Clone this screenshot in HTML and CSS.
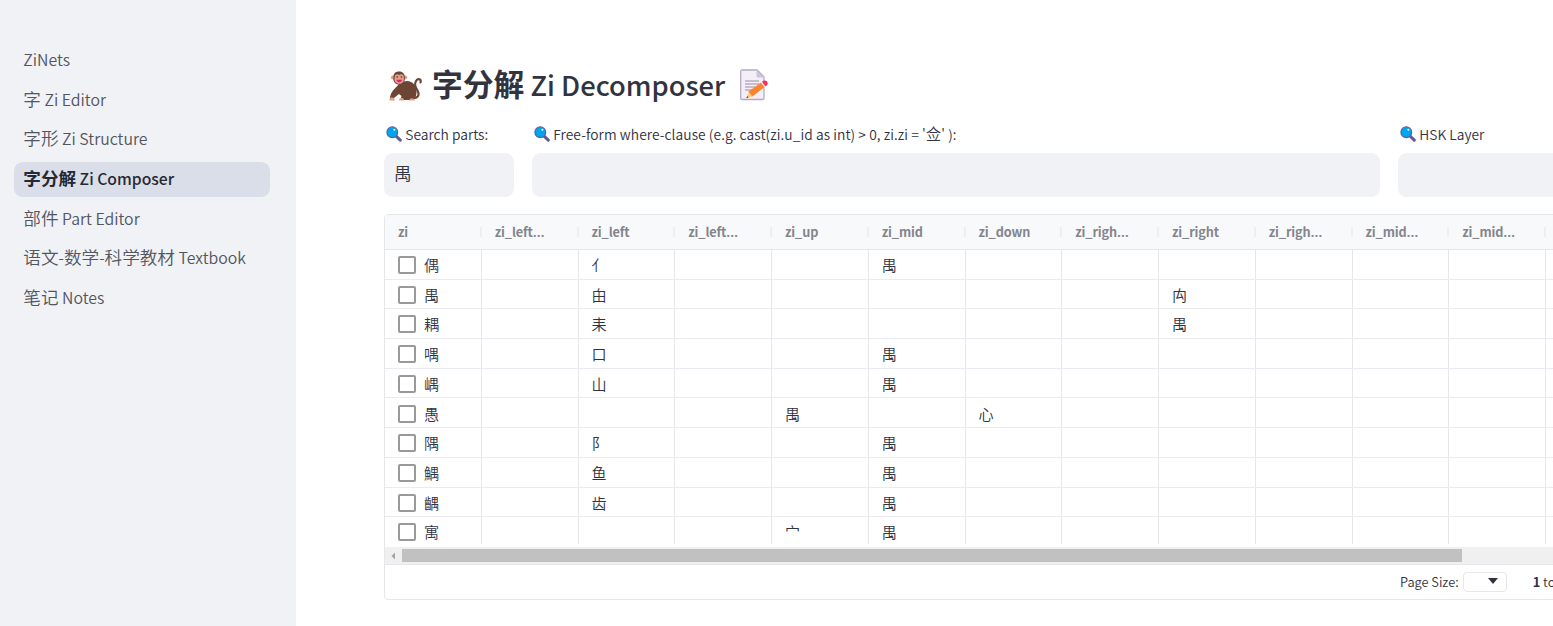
FILE: index.html
```html
<!DOCTYPE html>
<html lang="zh-CN">
<head>
<meta charset="utf-8">
<title>Zi Decomposer</title>
<link rel="stylesheet" href="styles.css">
</head>
<body>
<svg width="0" height="0" class="defs">
  <symbol id="lens" viewBox="0 0 16 16">
    <path d="M10.3 10.3l4 3.8" stroke="#635994" stroke-width="3" stroke-linecap="round"/>
    <circle cx="6.3" cy="6.2" r="5.4" fill="#00a6ed" stroke="#635994" stroke-width="1.1"/>
    <circle cx="8.4" cy="3.8" r="1" fill="#fff"/>
  </symbol>
</svg>
<div class="app">
  <nav class="sidebar">
    <a class="item">ZiNets</a>
    <a class="item"><span class="han">字</span> Zi Editor</a>
    <a class="item"><span class="han">字形</span> Zi Structure</a>
    <a class="item active"><span class="han">字分解</span> Zi Composer</a>
    <a class="item"><span class="han">部件</span> Part Editor</a>
    <a class="item"><span class="han">语文</span>-<span class="han">数学</span>-<span class="han">科学教材</span> Textbook</a>
    <a class="item"><span class="han">笔记</span> Notes</a>
  </nav>
  <main class="main">
    <h1 class="title">
      <svg class="monkey" viewBox="0 0 34 34">
        <path d="M22 29c7 1 9-3 6.500-7.500-2-3.500-3.500-6-1.500-9.500 2-3 5.500-2 4.500 1.500" fill="none" stroke="#6d4534" stroke-width="2.200" stroke-linecap="round"/>
        <path d="M11 14c4-2 8-3 11-1 4 2 6 6 5.500 11-.3 3-1 5-3 7H11.500l1-4-2.500-2-5 4-1 2H.8c0-5 2-9 5.500-12z" fill="#6d4534"/>
        <circle cx="4" cy="8.500" r="2.100" fill="#e39d89"/><circle cx="16.200" cy="8.500" r="2.100" fill="#e39d89"/>
        <path d="M4.300 9c0-4.500 2-6.500 5.800-6.500s5.800 2.500 5.800 6.500-2 6.500-5.800 6.500S4.300 13 4.300 9z" fill="#6d4534"/>
        <path d="M5.700 8c0-3 3-3.500 4.500-2 1.500-1.500 5-1 4.500 2 1 4-1 6.800-4.400 6.800S4.700 12 5.700 8z" fill="#e39d89"/>
        <circle cx="8.200" cy="8" r=".8" fill="#43302b"/><circle cx="12.400" cy="8" r=".8" fill="#43302b"/>
        <path d="M7.500 10.800h5.500c0 3.200-5.500 3.200-5.500 0z" fill="#e01b8c"/>
        <path d="M.8 31.500c0-4 3-4 5-1v1zM10 31.500c0-3 4-3 5-1v1zM20 31.500c1-3 5-3 6 0z" fill="#e39d89"/>
      </svg>
      <span class="words"><span class="han">字分解</span> Zi Decomposer</span>
      <svg class="memo" viewBox="0 0 30 32">
        <path d="M2 1h15l7 7v21q0 1.500-1.500 1.500H2Q.7 30.500.7 29V2.500Q.7 1 2 1z" fill="#f3eef8" stroke="#b4acbc" stroke-width="1.300"/>
        <path d="M16.500 1l7.500 7.500h-6q-1.500 0-1.500-1.500z" fill="#cdc4d6"/>
        <path d="M5 12h14M5 15h14M5 18h10M5 21h7" stroke="#998ea4" stroke-width="1.100"/>
        <path d="M8.500 23l-1.800 5.800 6-1.300z" fill="#ffce7c"/><path d="M7.200 27l-.8 2 2.200-.6z" fill="#402a32"/>
        <path d="M8.500 22.500L21 13.500l3.500 4.500-12.200 9.500z" fill="#ff822d"/>
        <path d="M21 13.500l1.500-1.200 3.500 4.600-1.500 1.100z" fill="#f3eef8"/>
        <path d="M22 12.700c4-3.500 8.500 1.600 3.600 4.700z" fill="#f92f60"/>
      </svg>
    </h1>
    <div class="filters">
      <div class="field"><label><svg class="lens"><use href="#lens"/></svg>Search parts:</label><div class="input"><span class="han">禺</span></div></div>
      <div class="field wide"><label><svg class="lens"><use href="#lens"/></svg>Free-form where-clause (e.g. cast(zi.u_id as int) &gt; 0, zi.zi = '<span class="han">佥</span>' ):</label><div class="input"></div></div>
      <div class="field"><label><svg class="lens"><use href="#lens"/></svg>HSK Layer</label><div class="input"></div></div>
    </div>
    <div class="table">
      <div class="head row">
        <span>zi</span><span>zi_left<b class="dots">…</b></span><span>zi_left</span><span>zi_left<b class="dots">…</b></span><span>zi_up</span><span>zi_mid</span><span>zi_down</span><span>zi_righ<b class="dots">…</b></span><span>zi_right</span><span>zi_righ<b class="dots">…</b></span><span>zi_mid<b class="dots">…</b></span><span>zi_mid<b class="dots">…</b></span><span></span>
      </div>
      <div class="body">
        <div class="row"><span><i class="check"></i>偶</span><span></span><span>亻</span><span></span><span></span><span>禺</span><span></span><span></span><span></span><span></span><span></span><span></span><span></span></div>
        <div class="row"><span><i class="check"></i>禺</span><span></span><span>甶</span><span></span><span></span><span></span><span></span><span></span><span>禸</span><span></span><span></span><span></span><span></span></div>
        <div class="row"><span><i class="check"></i>耦</span><span></span><span>耒</span><span></span><span></span><span></span><span></span><span></span><span>禺</span><span></span><span></span><span></span><span></span></div>
        <div class="row"><span><i class="check"></i>喁</span><span></span><span>口</span><span></span><span></span><span>禺</span><span></span><span></span><span></span><span></span><span></span><span></span><span></span></div>
        <div class="row"><span><i class="check"></i>嵎</span><span></span><span>山</span><span></span><span></span><span>禺</span><span></span><span></span><span></span><span></span><span></span><span></span><span></span></div>
        <div class="row"><span><i class="check"></i>愚</span><span></span><span></span><span></span><span>禺</span><span></span><span>心</span><span></span><span></span><span></span><span></span><span></span><span></span></div>
        <div class="row"><span><i class="check"></i>隅</span><span></span><span>阝</span><span></span><span></span><span>禺</span><span></span><span></span><span></span><span></span><span></span><span></span><span></span></div>
        <div class="row"><span><i class="check"></i>鰅</span><span></span><span>鱼</span><span></span><span></span><span>禺</span><span></span><span></span><span></span><span></span><span></span><span></span><span></span></div>
        <div class="row"><span><i class="check"></i>齵</span><span></span><span>齿</span><span></span><span></span><span>禺</span><span></span><span></span><span></span><span></span><span></span><span></span><span></span></div>
        <div class="row"><span><i class="check"></i>寓</span><span></span><span></span><span></span><span>宀</span><span>禺</span><span></span><span></span><span></span><span></span><span></span><span></span><span></span></div>
      </div>
      <div class="scroll"><svg class="arrow" viewBox="0 0 4 8"><path d="M4 .5v7L.5 4z" fill="#a3a3a3"/></svg><div class="thumb"></div></div>
      <div class="foot"><span>Page Size:</span><div class="select"><svg class="caret" viewBox="0 0 10 6"><path d="M0 0h10L5 6z" fill="#31333f"/></svg></div><span class="range"><b>1</b> to</span></div>
    </div>
  </main>
</div>
</body>
</html>
```
FILE: styles.css
```css
* { box-sizing: border-box; }
body { margin: 0; font-family: "Noto Sans CJK SC", sans-serif; color: #31333f; background: #fff; overflow: hidden; }
.defs { position: absolute; }
.app { display: flex; height: 626px; overflow: hidden; }

.sidebar { flex: none; width: 296px; background: #f0f2f6; padding: 43.300px 26px 0 14px; display: flex; flex-direction: column; gap: 4.390px; }
.item { height: 35.200px; line-height: 34px; padding-left: 9.300px; border-radius: 8.800px; font-size: 15.850px; font-weight: 350; color: #53555f; white-space: pre; }
.item .han { font-size: 17.600px; line-height: 1; }
.item.active { background: #dadee9; color: #262832; font-weight: 500; font-size: 15.700px; }
.item.active .han { font-weight: 700; }

.main { flex: none; width: 1300px; padding: 66px 0 0 88px; }
.title { margin: 0; height: 39px; display: flex; align-items: center; font-size: 27.300px; font-weight: 500; line-height: 37px; white-space: pre; }
.title .han { font-size: 30.800px; font-weight: 700; line-height: 1; }
.monkey { width: 34px; height: 34px; margin: 1px 9px 0 5px; flex: none; }
.words { width: 293px; margin-top: -2px; }
.memo { width: 30px; height: 32px; margin: -1px 0 0 15px; flex: none; }

.filters { display: grid; grid-template-columns: 130px 848px 300px; gap: 18px; margin-top: 19px; }
.field label { display: flex; align-items: center; height: 20px; margin-bottom: 9px; padding-left: 2px; font-size: 13.800px; font-weight: 350; white-space: pre; }
.field.wide label { letter-spacing: .065px; }
.lens { width: 16px; height: 16px; margin-right: 3.300px; flex: none; }
.field label .han { font-size: 15.400px; line-height: 1; }
.input { height: 44px; background: #f0f2f6; border-radius: 8.800px; padding-left: 10px; font-size: 17.600px; line-height: 40px; font-weight: 350; }

.table { margin-top: 17px; width: 1300px; height: 386px; border: 1px solid #e6e7ea; border-radius: 4px; overflow: hidden; }
.row { display: grid; grid-template-columns: repeat(13, 96.750px); height: 29.700px; border-bottom: 1px solid #e9ebf0; }
.row span { display: flex; align-items: center; padding-left: 13px; padding-bottom: .5px; border-right: 1px solid #e6e7ea; font-size: 15.100px; font-weight: 350; }
.head.row { height: 35px; background: #f8f9fb; border-bottom-color: #e6e7ea; }
.head.row span { font-size: 12.700px; font-weight: 700; letter-spacing: -.12px; color: #84858c; border-right: 0; background: linear-gradient(#eeeff2, #eeeff2) right 0 center / 2px 10px no-repeat; }
.dots { font-family: "Open Sans", sans-serif; font-size: 14.500px; font-weight: 600; line-height: 1; }
.body { height: 294px; overflow: hidden; }
.check { width: 18px; height: 18px; border: 2px solid #999; border-radius: 2px; margin: 2px 8px 0 0; }
.scroll { height: 18px; margin-top: 3px; background: #f0f0f0; border-bottom: 1px solid #e6e7ea; display: flex; align-items: center; }
.arrow { width: 4px; height: 8px; margin: 0 7px 0 6px; }
.thumb { width: 1060px; height: 13px; background: #c1c1c1; }
.foot { height: 34px; display: flex; align-items: center; padding-left: 1015px; font-size: 12.800px; font-weight: 350; line-height: 19px; padding-bottom: 1px; white-space: pre; }
.select { width: 44px; height: 20px; margin: 1px 0 0 4px; border: 1px solid #e6e7ea; border-radius: 4px; padding: 5px 0 0 24px; display: flex; }
.caret { width: 10px; height: 6px; }
.range { margin-left: 26px; }
```
